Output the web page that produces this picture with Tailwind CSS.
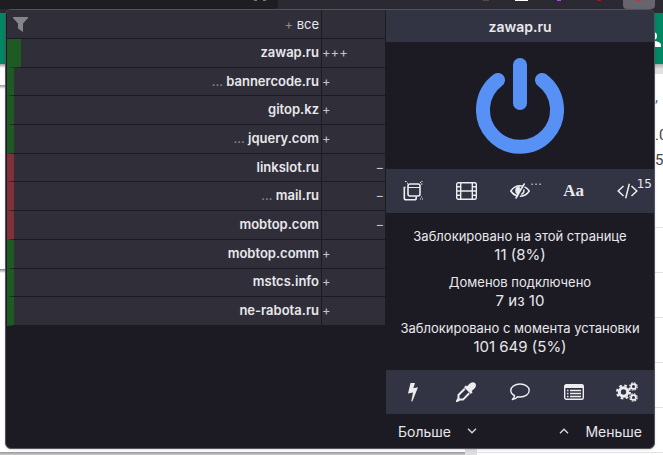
<!DOCTYPE html>
<html lang="ru">
  <head>
    <meta charset="UTF-8" />
    <meta name="viewport" content="width=device-width, initial-scale=1.0" />
    <script src="https://cdn.jsdelivr.net/npm/@tailwindcss/browser@4"></script>
    <title>zawap.ru</title>
  </head>
  <body class="relative min-h-screen overflow-hidden bg-white font-[Inter,sans-serif]">
    <!-- browser toolbar and the page under the popup -->
    <div class="flex h-screen flex-col overflow-hidden">
      <div class="flex h-[13px] shrink-0 items-start bg-[#2b2a33]">
        <div class="flex h-[9px] w-[278px] justify-end gap-[6px] rounded-br bg-[#1e1d22] pr-[12px]">
          <span class="h-px w-[3px] bg-[#77767c]"></span>
          <span class="h-px w-[3px] bg-[#77767c]"></span>
        </div>
        <div class="flex flex-1 items-start justify-end pr-2">
          <span class="mr-[26px] h-px w-[6px] bg-[#5b4a35]"></span>
          <span class="mr-[29px] h-px w-[13px] bg-white"></span>
          <span class="mr-[36px] h-px w-[4px] bg-[#b44be0]"></span>
          <span class="mr-[22px] h-px w-[4px] bg-[#b01515]"></span>
          <span class="flex h-[9px] w-[32px] justify-center rounded-b bg-[#66646d]">
            <span class="h-px w-[4px] bg-[#c03038]"></span>
          </span>
        </div>
      </div>
      <div class="flex min-h-0 flex-1 justify-between">
        <div class="flex w-[465px] flex-col">
          <div class="h-[51px] bg-[#008764]"></div>
          <div class="h-[4px] bg-linear-to-b from-[#999] to-white"></div>
          <div class="h-[17px]"></div>
          <div class="h-[4px] bg-linear-to-b from-[#999] to-white"></div>
          <div class="h-[180px]"></div>
          <div class="h-[4px] bg-linear-to-b from-[#888] to-white"></div>
          <div class="flex-1"></div>
          <div class="h-[3px] bg-linear-to-b from-[#999] to-[#ccc]"></div>
        </div>
        <div class="w-3 bg-[#dedede]"></div>
        <div class="flex flex-1 flex-col items-end overflow-hidden font-[Roboto,sans-serif]">
          <div class="flex h-[51px] w-full shrink-0 items-center justify-end bg-[#008764]">
            <svg class="h-[16px] w-[10px] fill-white" viewBox="0 0 10 16" aria-hidden="true">
              <circle cx="0" cy="5" r="4" />
              <path d="M0 10c5 0 8 2 8 4v2H0z" />
            </svg>
          </div>
          <div class="h-[10px] w-full shrink-0 bg-linear-to-b from-[#aaa] via-[#e0e0e0] to-[#e0e0e0]"></div>
          <div class="flex h-[154px] w-full shrink-0 flex-col items-end border-b border-[#e2e2e2] pt-3 text-[15px] text-[#444]">
            <p class="w-2 text-[#3b6ea8]">,</p>
            <p class="mt-[15px] w-2 whitespace-nowrap">.0</p>
            <p class="mt-[3px] w-2">5</p>
          </div>
          <div class="h-[45px] w-full shrink-0 border-b border-[#e2e2e2]"></div>
          <div class="h-[45px] w-full shrink-0 border-b border-[#e2e2e2]"></div>
          <div class="h-[45px] w-full shrink-0 border-b border-[#e2e2e2]"></div>
          <div class="h-[45px] w-full shrink-0 border-b border-[#e2e2e2]"></div>
          <div class="h-[45px] w-full shrink-0 border-b border-[#e2e2e2]"></div>
        </div>
      </div>
    </div>

    <!-- popup -->
    <main class="absolute top-[9px] right-2 left-[5px] flex overflow-hidden rounded-md border border-[#54535d] bg-[#1c1b24] text-[#e8e8ec] shadow">
      <section class="flex-1 pl-px">
        <table class="h-[316px] w-full table-fixed border-separate border-spacing-0 text-[13px] leading-4">
          <colgroup>
            <col />
            <col class="w-[63px]" />
          </colgroup>
          <thead class="bg-[#2f2e39]">
            <tr class="h-[29px]">
              <th class="border-r border-b border-[#1c1b24] p-0 pr-[2px] font-normal">
                <div class="flex items-center justify-between pl-[6px]">
                  <button aria-label="Фильтр">
                    <svg class="size-[15px] fill-[#85848b]" viewBox="0 0 15 15"><path d="M0 0h15v1L10 6.500V15L5 11.500V6.500L0 1z" /></svg>
                  </button>
                  <span><span class="text-[#8d8c93]">+</span> все</span>
                </div>
              </th>
              <th class="border-b border-[#1c1b24] p-0"></th>
            </tr>
          </thead>
          <tbody class="bg-[#2f2e39] [&_td]:border-b [&_td]:border-[#1c1b24] [&_td]:pt-0 [&_td]:pr-px [&_td]:pb-[2px] [&_td]:pl-0 [&_td]:text-[#c4c4c8] [&_th]:border-r [&_th]:border-b [&_th]:border-b-[#1c1b24] [&_th]:border-r-[#1c1b24] [&_th]:pt-0 [&_th]:pr-[2px] [&_th]:pb-[2px] [&_th]:text-right [&_th]:font-semibold [&_span]:font-normal [&_span]:text-[#8d8c93]">
            <tr><th class="border-l-14 border-l-[#1e5a24]">zawap.ru</th><td>+++</td></tr>
            <tr><th class="border-l-7 border-l-[#1e5a24]"><span>…</span> bannercode.ru</th><td>+</td></tr>
            <tr><th class="border-l-7 border-l-[#1e5a24]">gitop.kz</th><td>+</td></tr>
            <tr><th class="border-l-7 border-l-[#1e5a24]"><span>…</span> jquery.com</th><td>+</td></tr>
            <tr><th class="border-l-7 border-l-[#80303a]">linkslot.ru</th><td class="text-right">−</td></tr>
            <tr><th class="border-l-7 border-l-[#80303a]"><span>…</span> mail.ru</th><td class="text-right">−</td></tr>
            <tr><th class="border-l-7 border-l-[#80303a]">mobtop.com</th><td class="text-right">−</td></tr>
            <tr><th class="border-l-7 border-l-[#1e5a24]">mobtop.comm</th><td>+</td></tr>
            <tr><th class="border-l-7 border-l-[#1e5a24]">mstcs.info</th><td>+</td></tr>
            <tr><th class="border-l-7 border-l-[#1e5a24]">ne-rabota.ru</th><td>+</td></tr>
          </tbody>
        </table>
      </section>

      <section class="ml-px w-[268px] shrink-0 text-center">
        <h1 class="h-8 bg-[#323443] text-[14px] leading-[34px] font-semibold">zawap.ru</h1>
        <div class="flex h-[127px] items-start justify-center pt-4">
          <button aria-label="Включить или выключить">
            <svg class="h-[96px] w-[88px]" viewBox="0 0 88 96" fill="none" stroke="#5791f5" stroke-width="14" stroke-linecap="round">
              <path d="M44 7v38M22 22a37 37 0 1 0 44 0" />
            </svg>
          </button>
        </div>

        <div class="grid h-11 grid-cols-5 place-items-center bg-[#323443]">
          <button aria-label="Всплывающие окна">
            <svg class="size-5" viewBox="0 0 20 20" fill="none" stroke="#ededf0" stroke-width="1.600">
              <rect x="5" y="3" width="12" height="12" rx="2" />
              <path d="M5 6.500h12" stroke-width="1.200" />
              <path d="M2.500 6.500H1.300V17q0 1.800 1.800 1.800h8.500q1.600 0 1.600-1.800v-1.500" />
              <path d="M2 .5h1.500M4 2.200h1M17 1.500h1M19 0v1M18 3h1.500M18 16h1M19 18h1M17 18h1" stroke-width="1" />
            </svg>
          </button>
          <button aria-label="Медиаэлементы">
            <svg class="h-[18px] w-[21px]" viewBox="0 0 21 18" fill="none" stroke="#ededf0" stroke-width="1.400">
              <rect x=".7" y=".7" width="19.600" height="16.600" rx="1.500" />
              <path d="M4.700 1v16M16.300 1v16M4.700 9h11.600M1 4.800h3.700M1 9h3.700M1 13.200h3.700M16.300 4.800H20M16.300 9H20M16.300 13.200H20" />
            </svg>
          </button>
          <button class="relative" aria-label="Косметические фильтры">
            <svg class="h-[16px] w-[20px]" viewBox="0 0 20 16" fill="none" stroke="#ededf0" stroke-width="1.500" stroke-linecap="round">
              <path d="M7.500 13C4.500 12.200 2.200 10.300.8 8 3 4.600 6.200 2.700 10 2.700q1.500 0 2.500.4M15 4.200Q17.700 5.700 19.200 8 16.200 12.700 10.500 13.300" />
              <path d="M14.200 1 6 15" />
              <path d="M8 11Q5.800 9.800 5.900 7.500 6.100 4.500 9.500 4.100M14 7Q14.300 9.500 11.800 11.200" />
              <path d="M6.500 4.500Q5 8 8 11l3-5.500z" fill="#ededf0" stroke="none" />
            </svg>
            <span class="absolute -top-[10px] left-5 font-['DejaVu_Sans',sans-serif] text-[12px] leading-4 text-[#b9cce8]">…</span>
          </button>
          <button class="font-['Liberation_Serif',serif] text-[17px] leading-5 font-bold" aria-label="Сторонние шрифты">Aa</button>
          <button class="relative" aria-label="JavaScript">
            <svg class="h-[16px] w-[21px]" viewBox="0 0 21 16" fill="none" stroke="#ededf0" stroke-width="1.500">
              <path d="M6.500 3 1.200 8l5.300 5M14.500 3l5.300 5-5.300 5M12.300.8 8.700 15.200" />
            </svg>
            <span class="absolute -top-[7px] left-5 font-['DejaVu_Sans',sans-serif] text-[12px] leading-4">15</span>
          </button>
        </div>

        <dl class="h-[157px] pt-[13px]">
          <dt class="text-[13px] leading-5">Заблокировано на этой странице</dt>
          <dd class="mb-2 text-[15px] leading-[18px]">11 (8%)</dd>
          <dt class="text-[13px] leading-5">Доменов подключено</dt>
          <dd class="mb-2 text-[15px] leading-[18px]">7 из 10</dd>
          <dt class="text-[13px] leading-5">Заблокировано с момента установки</dt>
          <dd class="text-[15px] leading-[18px]">101 649 (5%)</dd>
        </dl>

        <div class="grid h-11 grid-cols-5 place-items-center bg-[#323443]">
          <button aria-label="Режим временного скрытия">
            <svg class="h-[19px] w-[10px] fill-[#ededf0]" viewBox="0 0 10 19"><path d="M2.500 0H7L5.300 5.200 10 4.200 4.300 18.500 3.300 18.300 5 9.500 0 10.500z" /></svg>
          </button>
          <button aria-label="Пипетка">
            <svg class="size-5" viewBox="0 0 20 20" fill="#ededf0">
              <path d="M12.800 2.600C15 .2 17.400-.4 19 1s1.200 4-1.300 6.200l-2 1.800.9 1.200-1.800 1.800-6.800-6.800 1.800-1.800 1.200.9z" />
              <path d="M8.800 6.800 2.500 13v3.200L1 19l2.800-1.400H7l6.200-6.300" fill="none" stroke="#ededf0" stroke-width="2" />
            </svg>
          </button>
          <button aria-label="Сообщить о проблеме">
            <svg class="h-[18px] w-[20px]" viewBox="0 0 20 18" fill="none" stroke="#ededf0" stroke-width="1.400" stroke-linejoin="round">
              <path d="M10 1C5 1 .8 3.800.8 7.500c0 2.100 1.500 4 3.800 5.200-.2 1.600-1 2.800-2.200 3.900 2.300-.3 4-1.300 5.200-2.800q1.200.2 2.400.2c5.200 0 9.200-2.800 9.200-6.500S15.200 1 10 1z" />
            </svg>
          </button>
          <button aria-label="Журнал">
            <svg class="h-[16px] w-[20px]" viewBox="0 0 20 16" fill="none" stroke="#ededf0" stroke-width="1.400">
              <rect x=".7" y=".7" width="18.600" height="14.600" rx="1.500" />
              <path d="M1 2.500h18" stroke-width="3" />
              <path d="M3 6.500h1.500M3 9.500h1.500M3 12.500h1.500M6 6.500h11M6 9.500h11M6 12.500h11" />
            </svg>
          </button>
          <button aria-label="Панель управления">
            <svg class="h-[20px] w-[22px]" viewBox="0 0 22 20" fill="none" stroke="#ededf0">
              <circle cx="7.500" cy="10" r="4.200" stroke-width="3" />
              <circle cx="7.500" cy="10" r="6.500" stroke-width="2" stroke-dasharray="2.600 2.505" />
              <circle cx="17.500" cy="4.500" r="2.400" stroke-width="1.600" />
              <circle cx="17.500" cy="4.500" r="3.700" stroke-width="1.200" stroke-dasharray="1.700 1.206" />
              <circle cx="17.500" cy="15.500" r="2.400" stroke-width="1.600" />
              <circle cx="17.500" cy="15.500" r="3.700" stroke-width="1.200" stroke-dasharray="1.700 1.206" />
            </svg>
          </button>
        </div>

        <div class="flex h-[34px] items-center justify-between px-3 text-[14px]">
          <button class="flex items-center gap-4">
            Больше
            <svg class="h-[6px] w-[10px]" viewBox="0 0 10 6" fill="none" stroke="#d8d8dc" stroke-width="1.400"><path d="m1 .8 4 4 4-4" /></svg>
          </button>
          <button class="flex items-center gap-4">
            <svg class="h-[6px] w-[10px]" viewBox="0 0 10 6" fill="none" stroke="#d8d8dc" stroke-width="1.400"><path d="m1 5.200 4-4 4 4" /></svg>
            Меньше
          </button>
        </div>
      </section>
    </main>
  </body>
</html>
